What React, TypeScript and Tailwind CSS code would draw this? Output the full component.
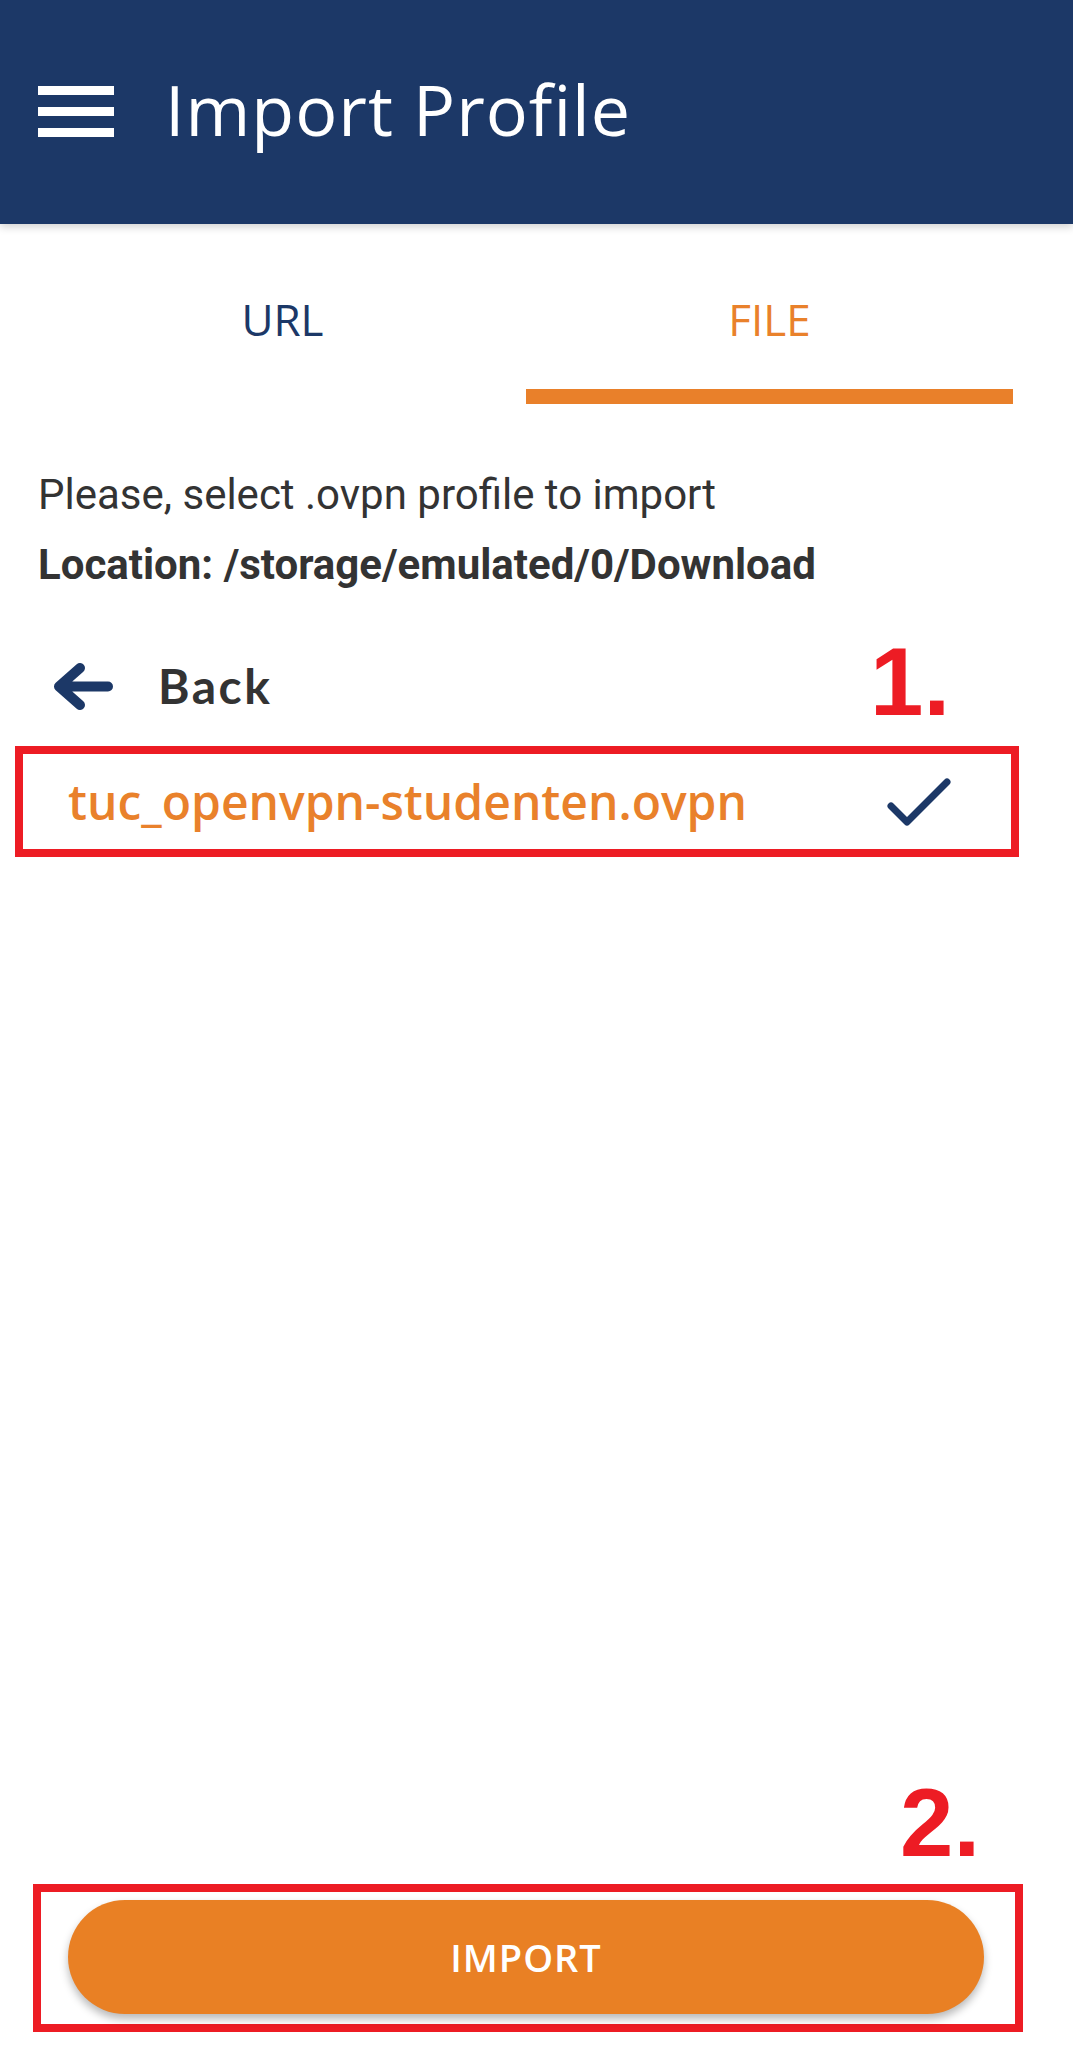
import React from "react";

export default function App() {
  return (
    <div className="relative flex min-h-[2057px] w-[1073px] flex-col bg-white" style={{ fontFamily: '"Open Sans", sans-serif' }}>
      {/* Header */}
      <header className="relative z-10 flex h-[224px] items-center bg-[#1c3867] pb-[6px] pl-[38px] shadow-[0_3px_8px_rgba(0,0,0,0.18)]">
        <div className="mt-[5px] flex w-[76px] flex-col gap-[12px]">
          <div className="h-[9px] w-[76px] bg-white" />
          <div className="h-[9px] w-[76px] bg-white" />
          <div className="h-[9px] w-[76px] bg-white" />
        </div>
        <h1 className="ml-[51px] font-['Open_Sans',sans-serif] text-[70px] font-normal leading-none tracking-[1px] text-white">
          Import Profile
        </h1>
      </header>

      {/* Tabs */}
      <div className="ml-[39px] flex w-[974px]">
        <div className="flex w-1/2 flex-col">
          <div className="h-[165px] pt-[73px] text-center text-[44px] font-medium leading-none text-[#1c3867]">URL</div>
          <div className="h-[15px]" />
        </div>
        <div className="flex w-1/2 flex-col">
          <div className="h-[165px] pt-[73px] text-center text-[44px] font-medium leading-none text-[#e9812b]">FILE</div>
          <div className="h-[15px] bg-[#e9802a]" />
        </div>
      </div>

      {/* Info */}
      <div className="pl-[38px] pr-[20px] font-['Roboto',sans-serif] text-[42px] leading-[42px] text-[#333333]">
        <p className="mt-[70px]">Please, select .ovpn profile to import</p>
        <p className="mt-[28px] font-bold">Location: /storage/emulated/0/Download</p>
      </div>

      {/* Back row */}
      <div className="mt-[60px] flex h-[80px] items-center pl-[53px]">
        <svg width="60" height="47" viewBox="0 0 60 47" fill="none">
          <path d="M55 23.5H6M27 5L6 23.5L27 42" stroke="#1c3867" strokeWidth="10" strokeLinecap="round" strokeLinejoin="round" />
        </svg>
        <span className="ml-[45px] font-['Lato',sans-serif] text-[48px] font-bold leading-none tracking-[2.5px] text-[#333333]">Back</span>
      </div>

      {/* File row (annotated) */}
      <div className="ml-[15px] mt-[20px] flex h-[111px] w-[1004px] items-center justify-between border-[8px] border-[#ed1c24] pl-[45px] pr-[56px]">
        <span className="text-[48px] font-semibold leading-none text-[#e9812b]">tuc_openvpn-studenten.ovpn</span>
        <svg width="70" height="54" viewBox="0 0 70 54" fill="none">
          <path d="M6 31L22 47L62 7" stroke="#1c3867" strokeWidth="7" strokeLinecap="round" strokeLinejoin="round" />
        </svg>
      </div>

      <div className="flex-1" />

      {/* Import button (annotated) */}
      <div className="mb-[25px] ml-[33px] w-[990px] border-[8px] border-[#ed1c24] pb-[10px] pl-[27px] pr-[31px] pt-[8px]">
        <button className="flex h-[114px] w-full items-center justify-center rounded-full bg-[#e98024] text-[38px] font-semibold tracking-[1px] text-white shadow-[0_5px_8px_rgba(0,0,0,0.28)]">
          IMPORT
        </button>
      </div>

      {/* Annotation numbers */}
      <span className="absolute left-[870px] top-[634px] font-['Liberation_Sans',sans-serif] text-[96px] font-bold leading-none text-[#ed1c24]">1.</span>
      <span className="absolute left-[900px] top-[1775px] font-['Liberation_Sans',sans-serif] text-[96px] font-bold leading-none text-[#ed1c24]">2.</span>
    </div>
  );
}
